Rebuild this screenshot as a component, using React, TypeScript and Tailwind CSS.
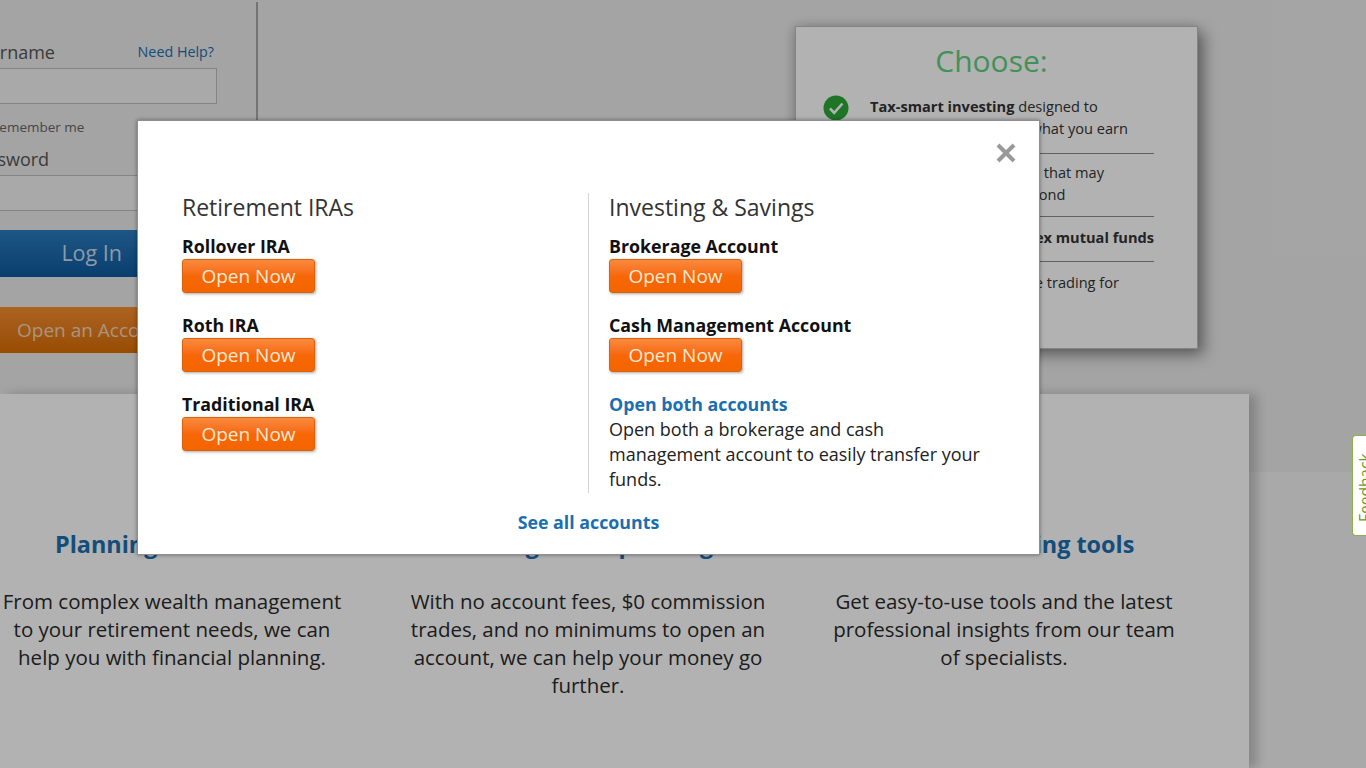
const font = { fontFamily: "'Open Sans', 'Noto Sans', sans-serif" };

function OpenNow() {
  return (
    <button className="block h-[34px] w-[133px] rounded-[3px] border border-[#d9620a] bg-gradient-to-b from-[#f98a3c] via-[#f76707] to-[#f36500] text-center text-[19px] leading-[32px] text-[#ffe9d6] shadow-[1px_1px_3px_rgba(0,0,0,0.35)]">
      Open Now
    </button>
  );
}

function Item({ title }: { title: string }) {
  return (
    <div className="mb-[20px]">
      <div className="text-[17.8px] font-bold leading-[25px] text-[#111]">{title}</div>
      <OpenNow />
    </div>
  );
}

function Feature({ title, body }: { title: string; body: string[] }) {
  return (
    <div className="flex w-[360px] flex-col items-center text-center">
      <h3 className="mb-[28px] whitespace-nowrap text-[23.4px] font-bold leading-[30px] text-[#1a6fb0]">{title}</h3>
      {body.map((l) => (
        <div key={l} className="whitespace-nowrap text-[20.5px] leading-[28px] text-[#2a2a2a]">{l}</div>
      ))}
    </div>
  );
}

export default function App() {
  return (
    <div className="relative h-[768px] w-[1366px] overflow-hidden bg-[#f2f2f2]" style={font}>
      <div className="flex h-[472px] bg-[#ebebeb]">
        <div className="-ml-[40px] h-[394px] w-[298px] pt-[2px]">
          <div className="h-[392px] border-r-2 border-[#a6a6a6] pt-[38px] pr-[39px] pl-[8px]">
            <div className="flex items-center justify-between pr-[3px]">
              <span className="text-[18px] leading-[24px] text-[#555]">Username</span>
              <span className="text-[14.3px] leading-[24px] text-[#1a6fb0]">Need Help?</span>
            </div>
            <div className="mt-[4px] h-[36px] border border-[#bdbdbd] bg-[#f3f3f3]" />
            <div className="mt-[13px] pl-[23px] text-[13.5px] leading-[20px] text-[#666]">Remember me</div>
            <div className="mt-[10px] text-[18px] leading-[24px] text-[#555]">Password</div>
            <div className="mt-[4px] h-[36px] border border-[#bdbdbd] bg-[#f3f3f3]" />
            <div className="mt-[19px] h-[47px] bg-gradient-to-b from-[#2a7cc0] to-[#0d5a9e] pr-[95px] text-right text-[21.5px] leading-[45px] text-[#c9deef]">Log In</div>
            <div className="mt-[30px] h-[46px] bg-gradient-to-b from-[#f78f2e] to-[#d96e00] pl-[49px] text-[19px] leading-[46px] whitespace-nowrap text-[#f3d6b5]">Open an Account</div>
          </div>
        </div>
        <div className="ml-[537px] mt-[26px] h-[323px] w-[403px] border border-[#bdbdbd] bg-white pt-[15px] pr-[43px] pl-[27px] shadow-[6px_6px_14px_rgba(0,0,0,0.4),-2px_0_10px_rgba(0,0,0,0.15)]">
          <div className="pl-[6px] text-center text-[30px] leading-[38px] text-[#5fd07f]">Choose:</div>
          <div className="mt-[15px] flex">
            <svg viewBox="0 0 26 26" className="h-[26px] w-[26px] shrink-0">
              <circle cx="13" cy="13" r="12.5" fill="#2aa836" />
              <path d="M7 13.5l4.2 4.4L19.5 8.5" fill="none" stroke="#fff" strokeWidth="2.6" />
            </svg>
            <div className="ml-[21px] w-[284px] shrink-0 text-[14.6px] leading-[22px] text-[#333]">
              <div className="whitespace-nowrap"><b>Tax-smart investing</b> designed to</div>
              <div className="pr-[26px] text-right whitespace-nowrap">keep more of what you earn</div>
              <div className="mt-[14px] h-px bg-[#8a8a8a]" />
              <div className="mt-[7px] pr-[50px] text-right whitespace-nowrap">Low-cost options that may</div>
              <div className="pl-[148px]">a bond</div>
              <div className="mt-[11px] h-px bg-[#8a8a8a]" />
              <div className="mt-[9px] text-right font-bold whitespace-nowrap">index mutual funds</div>
              <div className="mt-[13px] h-px bg-[#8a8a8a]" />
              <div className="mt-[9px] pr-[35px] text-right whitespace-nowrap">Commission-free trading for</div>
            </div>
          </div>
        </div>
      </div>

      <div className="-mt-[78px] flex h-[374px] w-[1249px] gap-[56px] bg-white pt-[135px] shadow-[8px_0_10px_rgba(0,0,0,0.2)]">
        <div className="-ml-[8px]">
          <Feature title="Planning and advice" body={["From complex wealth management", "to your retirement needs, we can", "help you with financial planning."]} />
        </div>
        <Feature title="Savings and spending" body={["With no account fees, $0 commission", "trades, and no minimums to open an", "account, we can help your money go", "further."]} />
        <Feature title="Powerful trading tools" body={["Get easy-to-use tools and the latest", "professional insights from our team", "of specialists."]} />
      </div>

      <div className="absolute inset-0 bg-black/30" />

      <div className="absolute top-[435px] right-0 h-[101px] w-[14px] overflow-hidden rounded-l-[4px] border border-r-0 border-[#8db04a] bg-white">
        <div className="absolute top-[86px] left-[5px] w-[80px] origin-top-left -rotate-90 text-[15.5px] leading-[14px] whitespace-nowrap text-[#6f9a2c]">Feedback</div>
      </div>

      <div className="absolute top-[120px] left-[137px] h-[435px] w-[903px] border border-[#8f8f8f] bg-white shadow-[0_0_4px_rgba(0,0,0,0.4)]">
        <div className="absolute top-[22px] right-[23px] text-[#999]">
          <svg viewBox="0 0 20 20" className="h-[20px] w-[20px]"><path d="M2 2L18 18M18 2L2 18" stroke="currentColor" strokeWidth="4" /></svg>
        </div>
        <div className="ml-[44px] mt-[72px] flex h-[300px]">
          <div className="w-[406px]">
            <h2 className="mb-[12px] -mt-[1px] text-[23px] leading-[30px] text-[#333]">Retirement IRAs</h2>
            <Item title="Rollover IRA" />
            <Item title="Roth IRA" />
            <Item title="Traditional IRA" />
          </div>
          <div className="w-[402px] border-l border-[#d4d4d4] pl-[20px]">
            <h2 className="mb-[12px] -mt-[1px] text-[23px] leading-[30px] text-[#333]">Investing &amp; Savings</h2>
            <Item title="Brokerage Account" />
            <Item title="Cash Management Account" />
            <div className="text-[17.8px] font-bold leading-[25px] text-[#1a6fb0]">Open both accounts</div>
            <div className="w-[375px] text-[18px] leading-[25px] text-[#222]">Open both a brokerage and cash management account to easily transfer your funds.</div>
          </div>
        </div>
        <div className="mt-[17px] text-center text-[17.8px] font-bold leading-[25px] text-[#1a6fb0]">See all accounts</div>
      </div>
    </div>
  );
}
